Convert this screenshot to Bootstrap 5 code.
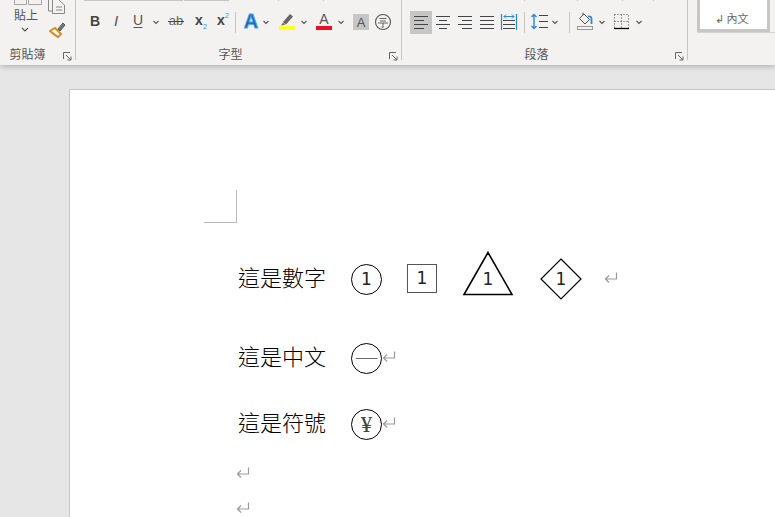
<!DOCTYPE html>
<html lang="zh-Hant">
<head>
<meta charset="utf-8">
<title>Word</title>
<link href="https://cdn.jsdelivr.net/npm/bootstrap@5.3.0/dist/css/bootstrap.min.css" rel="stylesheet">
<style>
html,body{height:100%;overflow:hidden;background:#e6e6e6;}
body{font-family:"Noto Sans CJK TC","Liberation Sans",sans-serif;color:#444;}
.ribbon{height:65px;background:#f3f2f1;box-shadow:0 1px 6px rgba(0,0,0,.28);position:relative;z-index:2;}
.rgroup{height:60px;border-right:1px solid #c8c6c4;position:relative;flex:none;}
.grp-clip{width:76px;}
.grp-font{width:326px;}
.grp-para{width:286px;}
.grp-style{flex:1;height:65px;position:relative;}
.glabel{font-size:12px;line-height:14px;color:#555;text-align:center;position:absolute;left:0;right:0;top:47px;}
.lab-clip{padding-right:20px;}
.lab-font{padding-right:16px;}
.lab-para{padding-right:16px;}
.launcher{position:absolute;right:3px;top:52px;display:block;}
.toolrow{padding:9px 0 0 8px;height:36px;}
.toolrow svg{flex:none;display:block;}
.toolrow text{font-family:"Liberation Sans",sans-serif;}
.topline{position:absolute;top:0;height:1px;background:#c8c6c4;}
.tl-a{left:8px;width:99px;}
.tl-b{left:108px;width:45px;}
.tl-c{left:202px;width:1px;}
.tl-d{left:247px;width:1px;}
.tl-e{left:122px;width:1px;}
.tl-f{left:175px;width:1px;}
.tl-g{left:220px;width:1px;}
.tl-h{left:251px;width:1px;}
.paste-col{width:48px;padding-left:14px;}
.paste-txt{font-size:12px;line-height:14px;margin-top:3px;color:#555;}
.copy-col{width:20px;}
.brush{margin-top:7px;margin-left:1px;}
.stylebox{position:absolute;left:9px;top:-3px;width:73px;height:35px;background:#fff;border:3px solid #c8c6c4;border-top:0;font-size:11px;line-height:13px;color:#666;}
.stylebox span{position:absolute;left:15px;top:15px;white-space:nowrap;}
.styleline{position:absolute;left:9px;right:0;top:32px;height:1px;background:#d6d5d4;}
.workspace{padding:24px 0 0 69px;}
.docpage{background:#fff;border:1px solid #c6c6c6;border-width:1px 0 0 1px;height:428px;color:#000;}
.cropmark{width:33px;height:33px;margin:100px 0 0 134px;border-right:1px solid #b8b8b8;border-bottom:1px solid #b8b8b8;}
.docrow{padding-left:168px;font-size:22px;}
.dr1{height:56px;margin-top:28px;}
.dr2{height:40px;margin-top:31px;}
.dr3{height:40px;margin-top:26px;}
.dr4{height:35px;margin-top:13px;padding-left:166px;}
.dr5{height:35px;padding-left:166px;}
.dtext{width:88px;font-weight:200;color:#000;line-height:1;white-space:nowrap;padding-bottom:6px;}
.encl{width:31px;height:31px;border:1px solid #000;background:#fff;color:#222;flex:none;font-family:"DejaVu Sans",sans-serif;font-size:17px;line-height:1;}
.g1{margin-left:25px;}
.g2{margin-left:26px;}
.g4{margin-left:22px;}
.encl-sq{border-radius:0;width:30px;height:29px;border-color:#555;margin-bottom:1px;}
.encl-cjk{font-family:"Noto Sans CJK TC",sans-serif;font-weight:100;font-size:24px;color:#444;}
.encl-yen{font-family:"Liberation Serif",serif;font-size:23px;color:#444;}
.shape{flex:none;display:block;}
.shape text{font-family:"DejaVu Sans",sans-serif;font-size:17px;fill:#222;}
.ret{flex:none;display:block;margin-bottom:3px;}
</style>
</head>
<body>
<header class="ribbon d-flex">
  <section class="rgroup grp-clip d-flex">
    <div class="paste-col">
      <svg width="28" height="5" class="d-block"><path d="M.5 0V4.500H12.500V0M14.500 0V4.500H27.500V0" fill="none" stroke="#a8a6a4"/></svg>
      <div class="paste-txt">貼上</div>
      <svg width="24" height="10" class="d-block mt-1"><path d="M8 2l3 3 3-3" fill="none" stroke="#555" stroke-width="1.100"/></svg>
    </div>
    <div class="copy-col">
      <svg width="18" height="15" class="d-block"><path d="M.5 0V11H4M4.500 0V13.500H16.500V5L11 0" fill="none" stroke="#8a8886"/><path d="M8 7h6M8 10h6" stroke="#8a8886"/></svg>
      <svg width="17" height="16" class="d-block brush"><path d="M1 9l5-3 6 6-3 3z" fill="#fff" stroke="#e08a1e" stroke-width="2"/><path d="M3 11l4 3" stroke="#e08a1e" stroke-width="1.500"/><path d="M9 7l5-6 2 2-5 6z" fill="#777" stroke="#555"/></svg>
    </div>
    <div class="glabel lab-clip">剪貼簿</div>
    <svg class="launcher" width="9" height="9"><path d="M.5 7V.5H7M3 3l5 5M8 4.500V8H4.500" fill="none" stroke="#666"/></svg>
  </section>

  <section class="rgroup grp-font">
    <div class="topline tl-a"></div><div class="topline tl-b"></div><div class="topline tl-c"></div><div class="topline tl-d"></div>
    <div class="toolrow d-flex align-items-start">
      <svg width="22" height="24"><text x="11" y="17" text-anchor="middle" font-size="14" font-weight="700" fill="#444">B</text></svg>
      <svg width="21" height="24"><text x="10" y="17" text-anchor="middle" font-size="15" font-style="italic" font-family="Liberation Serif" fill="#555">I</text></svg>
      <svg width="22" height="24"><text x="11" y="16" text-anchor="middle" font-size="14" fill="#555">U</text><path d="M6.500 18.500h9" stroke="#555"/></svg>
      <svg width="14" height="24"><path d="M4.500 12l2.500 2.500 2.500-2.500" fill="none" stroke="#555" stroke-width="1.100"/></svg>
      <svg width="26" height="24"><text x="13" y="16" text-anchor="middle" font-size="13" fill="#666">ab</text><path d="M5 12.500h16" stroke="#444"/></svg>
      <svg width="22" height="24"><text x="6" y="16" font-size="14" font-weight="700" fill="#444">x</text><text x="14" y="20" font-size="7" fill="#3a96dd">2</text></svg>
      <svg width="22" height="24"><text x="6" y="16" font-size="14" font-weight="700" fill="#444">x</text><text x="14" y="9" font-size="7" fill="#3a96dd">2</text></svg>
      <svg width="6" height="24"><path d="M2.500 3v21" stroke="#c8c6c4"/></svg>
      <svg width="24" height="24"><text x="12" y="19" text-anchor="middle" font-size="20" font-weight="700" fill="#1c5fa8" stroke="#45a5ea" stroke-width=".9">A</text></svg>
      <svg width="10" height="24"><path d="M.5 12L3 14.500 5.500 12" fill="none" stroke="#555" stroke-width="1.100"/></svg>
      <svg width="28" height="24"><path d="M10 13l7-8 3 2.500-7 8z" fill="#666"/><path d="M8 16.500l2-3 2.500 2z" fill="#666"/><rect x="6" y="17" width="16" height="4" fill="#ffff22"/></svg>
      <svg width="9" height="24"><path d="M.5 12L3 14.500 5.500 12" fill="none" stroke="#555" stroke-width="1.100"/></svg>
      <svg width="28" height="24"><text x="14" y="15" text-anchor="middle" font-size="14" fill="#555">A</text><rect x="6" y="17" width="16" height="4" fill="#e81123"/></svg>
      <svg width="12" height="24"><path d="M.5 12L3 14.500 5.500 12" fill="none" stroke="#555" stroke-width="1.100"/></svg>
      <svg width="22" height="24"><rect x="3" y="5" width="16" height="16" fill="#c6c6c6"/><text x="11" y="18" text-anchor="middle" font-size="13" fill="#555">A</text></svg>
      <svg width="22" height="24"><circle cx="11" cy="13" r="7.500" fill="none" stroke="#555" stroke-width="1.100"/><path d="M7.500 9.500h7M8 12h6M6 14h10M11 14v4.500l-1.500-.5" fill="none" stroke="#555" stroke-width=".9"/></svg>
    </div>
    <div class="glabel lab-font">字型</div>
    <svg class="launcher" width="9" height="9"><path d="M.5 7V.5H7M3 3l5 5M8 4.500V8H4.500" fill="none" stroke="#666"/></svg>
  </section>

  <section class="rgroup grp-para">
    <div class="topline tl-e"></div><div class="topline tl-f"></div><div class="topline tl-g"></div><div class="topline tl-h"></div>
    <div class="toolrow d-flex align-items-start">
      <svg width="22" height="25"><rect y="2" width="22" height="23" fill="#c8c6c4"/><path d="M4 7.500h14M4 11.500h10M4 15.500h14M4 19.500h10" stroke="#444"/></svg>
      <svg width="22" height="24"><path d="M4 7.500h14M7 11.500h8M4 15.500h14M7 19.500h8" stroke="#444"/></svg>
      <svg width="22" height="24"><path d="M4 7.500h14M8 11.500h10M4 15.500h14M8 19.500h10" stroke="#444"/></svg>
      <svg width="22" height="24"><path d="M4 7.500h14M4 11.500h14M4 15.500h14M4 19.500h14" stroke="#444"/></svg>
      <svg width="22" height="24"><path d="M3.500 5v16M18.500 5v16" stroke="#2b88d8" stroke-width="1.200"/><path d="M6 7.500h10M8 5.500l-2 2 2 2M14 5.500l2 2-2 2" fill="none" stroke="#2b88d8"/><path d="M5 11.500h12M5 15.500h12M5 19.500h12" stroke="#444"/></svg>
      <svg width="3" height="24"></svg>
      <svg width="5" height="24"><path d="M1.500 3v21" stroke="#c8c6c4"/></svg>
      <svg width="24" height="24"><path d="M6 5.500v14M3.500 8L6 5.500 8.500 8M3.500 17L6 19.500 8.500 17" fill="none" stroke="#2b88d8" stroke-width="1.400"/><path d="M11 6.500h9M11 12.500h9M11 18.500h9" stroke="#444" stroke-width="1.100"/></svg>
      <svg width="13" height="24"><path d="M.5 12L3 14.500 5.500 12" fill="none" stroke="#555" stroke-width="1.100"/></svg>
      <svg width="8" height="24"><path d="M4.500 3v21" stroke="#c8c6c4"/></svg>
      <svg width="24" height="24"><path d="M11 5l5.500 5.500-4.500 4.500-5.500-5.500z" fill="#f3f2f1" stroke="#555"/><path d="M10 6V3.500" stroke="#555"/><path d="M18.500 15V9.500C18.500 8 17 7 15 7.500" fill="none" stroke="#2b88d8" stroke-width="1.800"/><rect x="4.500" y="17.500" width="15" height="3" fill="#f3f2f1" stroke="#999"/></svg>
      <svg width="13" height="24"><path d="M2.500 12L5 14.500 7.500 12" fill="none" stroke="#555" stroke-width="1.100"/></svg>
      <svg width="24" height="24"><path d="M4.500 5.500h14v13.500M4.500 5.500v13.500M11.500 5.500v13.500M4.500 12.500h14" fill="none" stroke="#444" stroke-dasharray="1 2"/><path d="M4 19.500h15" stroke="#000" stroke-width="1.300"/></svg>
      <svg width="12" height="24"><path d="M2.500 12L5 14.500 7.500 12" fill="none" stroke="#555" stroke-width="1.100"/></svg>
    </div>
    <div class="glabel lab-para">段落</div>
    <svg class="launcher" width="9" height="9"><path d="M.5 7V.5H7M3 3l5 5M8 4.500V8H4.500" fill="none" stroke="#666"/></svg>
  </section>

  <section class="grp-style">
    <div class="stylebox"><span>↲ 內文</span></div>
    <div class="styleline"></div>
  </section>
</header>

<main class="workspace">
  <article class="docpage">
    <div class="cropmark"></div>

    <div class="docrow dr1 d-flex align-items-center">
      <span class="dtext">這是數字</span>
      <span class="encl rounded-circle d-flex align-items-center justify-content-center g1">1</span>
      <span class="encl encl-sq d-flex align-items-center justify-content-center g1">1</span>
      <svg class="shape g1" width="52" height="56"><path d="M26 1.500L2 43.500H50z" fill="#fff" stroke="#000" stroke-width="1.600"/><text x="26" y="34" text-anchor="middle">1</text></svg>
      <svg class="shape g2" width="42" height="42"><path d="M21 1L41 21 21 41 1 21z" fill="#fff" stroke="#000" stroke-width="1.200"/><text x="21" y="27" text-anchor="middle">1</text></svg>
      <svg class="ret g4" width="14" height="12"><path d="M12.500 .5V7H1.500M5 3.500L1.500 7 5 10.500" fill="none" stroke="#999" stroke-width="1.200"/></svg>
    </div>

    <div class="docrow dr2 d-flex align-items-center">
      <span class="dtext">這是中文</span>
      <span class="encl encl-cjk rounded-circle d-flex align-items-center justify-content-center g1">一</span>
      <svg class="ret ms-0" width="14" height="12"><path d="M12.500 .5V7H1.500M5 3.500L1.500 7 5 10.500" fill="none" stroke="#999" stroke-width="1.200"/></svg>
    </div>

    <div class="docrow dr3 d-flex align-items-center">
      <span class="dtext">這是符號</span>
      <span class="encl encl-yen rounded-circle d-flex align-items-center justify-content-center g1">¥</span>
      <svg class="ret ms-0" width="14" height="12"><path d="M12.500 .5V7H1.500M5 3.500L1.500 7 5 10.500" fill="none" stroke="#999" stroke-width="1.200"/></svg>
    </div>

    <div class="docrow dr4 d-flex align-items-center"><svg class="ret" width="14" height="12"><path d="M12.500 .5V7H1.500M5 3.500L1.500 7 5 10.500" fill="none" stroke="#999" stroke-width="1.200"/></svg></div>
    <div class="docrow dr5 d-flex align-items-center"><svg class="ret" width="14" height="12"><path d="M12.500 .5V7H1.500M5 3.500L1.500 7 5 10.500" fill="none" stroke="#999" stroke-width="1.200"/></svg></div>
  </article>
</main>
<script src="https://cdn.jsdelivr.net/npm/bootstrap@5.3.0/dist/js/bootstrap.bundle.min.js"></script>
</body>
</html>
